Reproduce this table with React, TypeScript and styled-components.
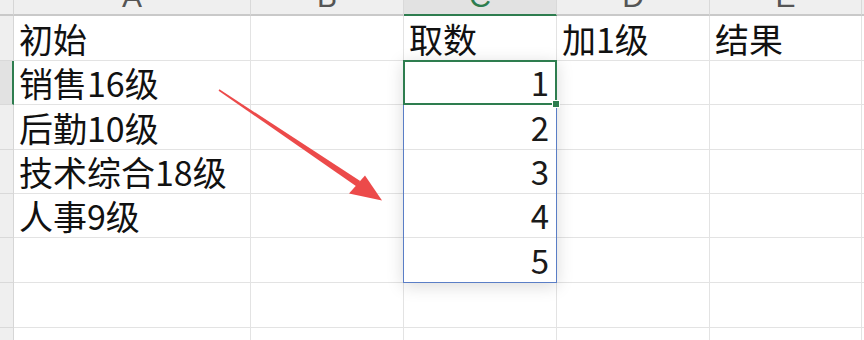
import React from "react";
import styled, { createGlobalStyle, css } from "styled-components";

const GlobalStyle = createGlobalStyle`
  html, body {
    margin: 0;
    padding: 0;
    background: #ffffff;
    overflow: hidden;
  }
  body {
    font-family: "Noto Sans CJK SC", "Noto Sans", sans-serif;
  }
`;

const COLS = [14, 237, 153, 153, 153, 152, 40];
const ROWS = [16, 45, 44, 45, 44, 44, 45, 45, 45];

const Sheet = styled.div`
  position: relative;
  width: 864px;
  height: 340px;
  overflow: hidden;
`;

const Grid = styled.div`
  display: grid;
  grid-template-columns: ${COLS.map((c) => `${c}px`).join(" ")};
  grid-template-rows: ${ROWS.map((r) => `${r}px`).join(" ")};
`;

const Corner = styled.div`
  box-sizing: border-box;
  background: #efefef;
  border-right: 1px solid #d6d6d6;
  border-bottom: 2px solid #c9c9c9;
`;

const ColHead = styled.div<{ $active?: boolean }>`
  box-sizing: border-box;
  display: flex;
  align-items: flex-end;
  justify-content: center;
  overflow: hidden;
  padding-bottom: 2px;
  background: ${(p) => (p.$active ? "#e2e2e2" : "#efefef")};
  border-right: 1px solid #d9d9d9;
  border-bottom: 2px solid ${(p) => (p.$active ? "#2e7d4f" : "#c9c9c9")};
  color: ${(p) => (p.$active ? "#2e7d4f" : "#555555")};
  font-family: "Liberation Sans", Arial, sans-serif;
  font-size: 30px;
  line-height: 30px;
`;

const RowHead = styled.div<{ $active?: boolean }>`
  box-sizing: border-box;
  background: ${(p) => (p.$active ? "#e2e2e2" : "#efefef")};
  border-bottom: 1px solid #d9d9d9;
  border-right: ${(p) => (p.$active ? "2px solid #2e7d4f" : "1px solid #d6d6d6")};
`;

const Cell = styled.div<{ $num?: boolean }>`
  box-sizing: border-box;
  display: flex;
  align-items: flex-end;
  overflow: visible;
  white-space: nowrap;
  border-right: 1px solid #e3e3e3;
  border-bottom: 1px solid #e3e3e3;
  color: #111111;
  font-size: 34px;
  line-height: 40px;
  padding: 0 6px 1px 5px;
  ${(p) =>
    p.$num &&
    css`
      justify-content: flex-end;
      padding-right: 7px;
      padding-bottom: 2px;
      font-size: 33px;
      color: #1a1a1a;
    `}
`;

const Selection = styled.div`
  position: absolute;
  left: 403px;
  top: 60px;
  width: 154px;
  height: 223px;
  box-sizing: border-box;
  border: 1px solid #5a7ec6;
  box-shadow: 0 3px 16px rgba(0, 0, 0, 0.15);
  pointer-events: none;
`;

const ActiveCell = styled.div`
  position: absolute;
  left: 403px;
  top: 60px;
  width: 154px;
  height: 45px;
  box-sizing: border-box;
  border: 2px solid #2e7d4f;
  pointer-events: none;
`;

const FillHandle = styled.div`
  position: absolute;
  left: 553px;
  top: 101px;
  width: 6px;
  height: 6px;
  background: #2e7d4f;
  box-shadow: 0 0 0 1px #ffffff;
`;

const Overlay = styled.svg`
  position: absolute;
  left: 0;
  top: 0;
  pointer-events: none;
`;

const columns = ["A", "B", "C", "D", "E", "F"];

type Value = string | number;
const rows: Value[][] = [
  ["初始", "", "取数", "加1级", "结果"],
  ["销售16级", "", 1, "", ""],
  ["后勤10级", "", 2, "", ""],
  ["技术综合18级", "", 3, "", ""],
  ["人事9级", "", 4, "", ""],
  ["", "", 5, "", ""],
  ["", "", "", "", ""],
  ["", "", "", "", ""],
];

function Arrow() {
  return (
    <Overlay width={864} height={340} viewBox="0 0 864 340">
      <polygon
        points="218.6,90.7 219.4,89.3 360.2,181.0 356.6,186.4"
        fill="#ec4a4a"
      />
      <polygon points="382,200.5 365,175.5 349,193.5" fill="#ec4a4a" />
    </Overlay>
  );
}

export default function App() {
  return (
    <>
      <GlobalStyle />
      <Sheet>
        <Grid>
          <Corner />
          {columns.map((c) => (
            <ColHead key={c} $active={c === "C"}>
              {c}
            </ColHead>
          ))}
          {rows.map((r, ri) => (
            <React.Fragment key={ri}>
              <RowHead $active={ri === 1} />
              {r.map((v, ci) => (
                <Cell key={ci} $num={typeof v === "number"}>
                  {v}
                </Cell>
              ))}
              <Cell />
            </React.Fragment>
          ))}
        </Grid>
        <Selection />
        <ActiveCell />
        <FillHandle />
        <Arrow />
      </Sheet>
    </>
  );
}
